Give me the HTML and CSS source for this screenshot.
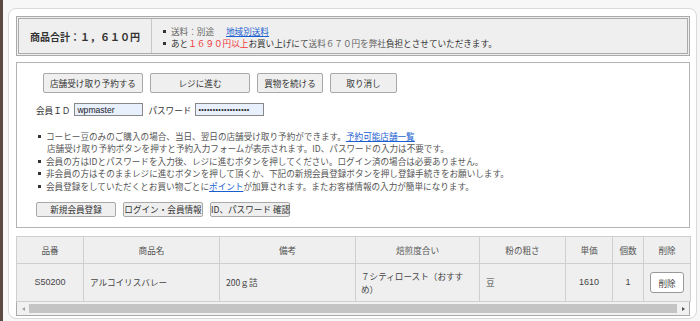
FILE: index.html
```html
<!DOCTYPE html>
<html lang="ja">
<head>
<meta charset="utf-8">
<link rel="stylesheet" href="styles.css">
</head>
<body>
<div class="panel">
  <div class="summary">
    <div class="total">商品合計：１，６１０円</div>
    <ul class="notes">
      <li><span class="muted">送料：別途</span><a class="link ship" href="#">地域別送料</a></li>
      <li>あと<span class="red">１６９０円以上</span>お買い上げにて<span class="muted">送料６７０円を弊社</span>負担とさせていただきます。</li>
    </ul>
  </div>

  <div class="box">
    <div class="btnrow first">
      <button class="btn w100">店舗受け取り予約する</button>
      <button class="btn w100">レジに進む</button>
      <button class="btn w66">買物を続ける</button>
      <button class="btn w67">取り消し</button>
    </div>
    <div class="login">
      <span class="lbl">会員ＩＤ</span>
      <input class="field" type="text" value="wpmaster">
      <span class="lbl pw">パスワード</span>
      <input class="field pwf" type="password" value="abcdefghijklmnopqr">
    </div>
    <ul class="info">
      <li>コーヒー豆のみのご購入の場合、当日、翌日の店舗受け取り予約ができます。<a class="link" href="#">予約可能店舗一覧</a><br>店舗受け取り予約ボタンを押すと予約入力フォームが表示されます。ID、パスワードの入力は不要です。</li>
      <li>会員の方はIDとパスワードを入力後、レジに進むボタンを押してください。ログイン済の場合は必要ありません。</li>
      <li>非会員の方はそのままレジに進むボタンを押して頂くか、下記の新規会員登録ボタンを押し登録手続きをお願いします。</li>
      <li>会員登録をしていただくとお買い物ごとに<a class="link" href="#">ポイント</a>が加算されます。またお客様情報の入力が簡単になります。</li>
    </ul>
    <div class="btnrow second">
      <button class="btn sm">新規会員登録</button>
      <button class="btn sm">ログイン・会員情報</button>
      <button class="btn sm">ID、パスワード 確認</button>
    </div>
  </div>

  <div class="tablewrap">
    <table class="cart">
      <colgroup>
        <col class="c1"><col class="c2"><col class="c3"><col class="c4"><col class="c5"><col class="c6"><col class="c7"><col class="c8">
      </colgroup>
      <thead>
        <tr><th>品番</th><th>商品名</th><th>備考</th><th>焙煎度合い</th><th>粉の粗さ</th><th>単価</th><th>個数</th><th>削除</th></tr>
      </thead>
      <tbody>
        <tr>
          <td class="ctr code">S50200</td>
          <td>アルコイリスバレー</td>
          <td>200ｇ詰</td>
          <td class="roast">７シティロースト（おすすめ）</td>
          <td>豆</td>
          <td class="ctr num">1610</td>
          <td class="ctr num">1</td>
          <td class="ctr"><button class="del">削除</button></td>
        </tr>
      </tbody>
    </table>
    <div class="scrollbar">
      <span class="arrow left"></span>
      <span class="thumb"></span>
      <span class="arrow right"></span>
    </div>
  </div>
</div>
</body>
</html>
```
FILE: styles.css
```css
* { box-sizing: border-box; }
html, body { margin: 0; padding: 0; }
body {
  background: #f7f7f7;
  border-left: 3px solid #5b4a42;
  height: 321px;
  overflow: hidden;
  font-family: "Noto Sans CJK JP", "Liberation Sans", sans-serif;
  font-size: 8.6px;
  color: #444;
}
.panel {
  margin: 8px 3px 0 5px;
  height: 311px;
  background: #fff;
  border: 1px solid #d9d9d9;
  border-radius: 8px;
  padding: 7px 6px 0 7px;
}
.summary {
  display: grid;
  grid-template-columns: 133px 1fr;
  height: 40px;
  border: 3px double #aaa;
  background: #efefef;
}
.total {
  display: flex;
  align-items: center;
  justify-content: center;
  border-right: 1px solid #c8c8c8;
  font-size: 10px;
  font-weight: bold;
  color: #333;
}
.notes {
  list-style: none;
  margin: 0;
  padding: 6px 0 0 20px;
  line-height: 12px;
  color: #333;
}
.notes li::before, .info li::before {
  content: "";
  display: inline-block;
  width: 3px;
  height: 3px;
  background: #333;
  margin: 0 5px 0 -9px;
  vertical-align: 2px;
}
.muted { color: #666; }
.ship { margin-left: 12px; }
.red { color: #f03a3a; }
.link { color: #1a5fd0; text-decoration: underline; }
.box {
  margin-top: 6px;
  border: 1px solid #b4b4b4;
  padding: 10px 19px 9px;
  height: 166px;
}
.btnrow { display: flex; gap: 7px; }
.btnrow.first { margin-left: 7px; }
.btn {
  font-family: inherit;
  font-size: 8.6px;
  color: #333;
  background: #efefef;
  border: 1px solid #a8a8a8;
  border-radius: 2px;
  padding: 0;
  height: 20px;
  white-space: nowrap;
}
.w100 { width: 100px; }
.w66 { width: 66px; }
.w67 { width: 67px; }
.btn.sm { width: 80px; height: 15px; line-height: 13px; }
.login {
  display: flex;
  align-items: center;
  margin-top: 10px;
  height: 13px;
  color: #333;
}
.field {
  width: 69px;
  height: 13px;
  margin-left: 4px;
  padding: 0 2px;
  border: 1px solid #888;
  background: #e8f0fe;
  font-family: "Liberation Sans", sans-serif;
  font-size: 8.6px;
  color: #222;
}
.pw { margin-left: 5px; }
.pwf { margin-left: 4px; font-size: 7px; letter-spacing: 0.4px; }
.info {
  list-style: none;
  margin: 14px 0 10px 0;
  padding: 0 0 0 11px;
  line-height: 12.4px;
  color: #555;
}
.tablewrap {
  margin-top: 8px;
  border: 1px solid #aaa;
  height: 80px;
}
.cart {
  border-collapse: collapse;
  table-layout: fixed;
  width: 674px;
  margin: -1px 0 0 -1px;
}
.c1 { width: 67px; } .c2 { width: 136px; } .c3 { width: 136px; } .c4 { width: 124px; }
.c5 { width: 86px; } .c6 { width: 47px; } .c7 { width: 31px; } .c8 { width: 47px; }
.cart th, .cart td {
  border: 1px solid #cfcfcf;
  background: #efefef;
  font-weight: normal;
  line-height: 13px;
}
.cart th { height: 27px; color: #555; text-align: center; }
.cart td { height: 38px; padding: 0 5px 0 6px; color: #444; }
.cart td.ctr { text-align: center; padding: 0; }
.cart td.roast { padding: 0 4px 0 5px; }
.code { color: #333; font-family: "Liberation Sans", sans-serif; font-size: 9px; }
.num { font-family: "Liberation Sans", sans-serif; font-size: 9px; color: #333; }
.del {
  width: 34px;
  height: 21px;
  padding: 0;
  background: #fff;
  border: 1px solid #999;
  border-radius: 3px;
  font-family: inherit;
  font-size: 8.6px;
  color: #444;
}
.scrollbar {
  display: flex;
  align-items: center;
  height: 13px;
  background: #f1f1f1;
}
.arrow { width: 12px; height: 13px; display: flex; align-items: center; justify-content: center; }
.arrow::before {
  content: "";
  border-top: 2.5px solid transparent;
  border-bottom: 2.5px solid transparent;
}
.arrow.left::before { border-right: 3px solid #a3a3a3; }
.arrow.right::before { border-left: 3px solid #505050; }
.thumb { flex: 1; height: 9px; background: #c4c4c4; }
```
